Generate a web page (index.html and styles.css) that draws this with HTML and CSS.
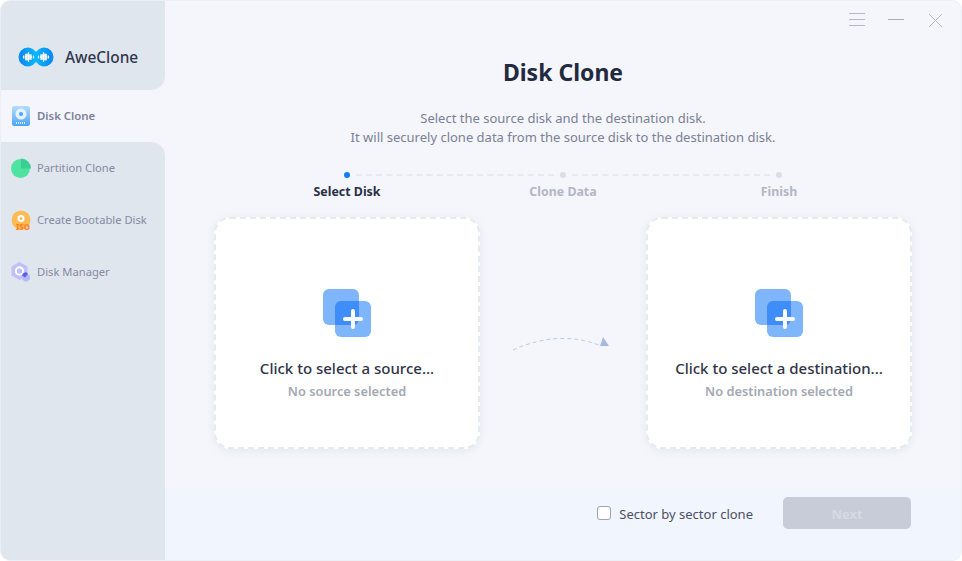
FILE: index.html
```html
<!DOCTYPE html>
<html>
<head>
<title>AweClone</title>
<link rel="stylesheet" href="styles.css">
</head>
<body>
<div class="window">
  <div class="sidebar">
    <div class="logo">
      <svg width="36" height="20" viewBox="0 0 36 20">
        <defs>
          <linearGradient id="logoGrad" x1="0" y1="0" x2="1" y2="0">
            <stop offset="0" stop-color="#0a8cf5"/>
            <stop offset="0.5" stop-color="#0ab8fa"/>
            <stop offset="1" stop-color="#0a8cf5"/>
          </linearGradient>
        </defs>
        <path d="M10 3.500c4 0 6 3.500 8 6.500s4 6.500 8 6.500a6.500 6.500 0 0 0 0-13c-4 0-6 3.500-8 6.500s-4 6.500-8 6.500a6.500 6.500 0 0 1 0-13z" fill="none" stroke="url(#logoGrad)" stroke-width="6"/>
        <path d="M5.500 9v2M8 7v6M10.500 5.500v9M13 7.500v5M15.500 9v2M20.500 9v2M23 7.500v5M25.500 5.500v9M28 7v6M30.500 9v2" stroke="#fff" stroke-width="1.100" stroke-linecap="round"/>
      </svg>
      <span class="logo-name">AweClone</span>
    </div>
    <div class="nav-item active">
      <svg width="18" height="20" viewBox="0 0 18 20">
        <defs>
          <linearGradient id="diskGrad" x1="0" y1="0" x2="0" y2="1">
            <stop offset="0" stop-color="#b5dcfb"/>
            <stop offset="1" stop-color="#4da3f5"/>
          </linearGradient>
        </defs>
        <rect width="18" height="20" rx="2.500" fill="url(#diskGrad)"/>
        <circle cx="9" cy="8" r="5.500" fill="#e6f3fe"/>
        <circle cx="9" cy="8" r="2" fill="#4da3f5"/>
        <path d="M4 17h10" stroke="#d6ebfd" stroke-width="2" stroke-dasharray="1 1"/>
      </svg>
      <span>Disk Clone</span>
    </div>
    <div class="nav-rest">
      <div class="nav-item">
        <svg width="20" height="20" viewBox="0 0 20 20">
          <circle cx="9.500" cy="10.500" r="9.500" fill="#4fe3a2"/>
          <path d="M10 0.500a10 10 0 0 1 10 10h-10z" fill="#38cf92"/>
        </svg>
        <span>Partition Clone</span>
      </div>
      <div class="nav-item">
        <svg width="20" height="20" viewBox="0 0 20 20">
          <circle cx="10" cy="10" r="9.500" fill="#fdbb55"/>
          <circle cx="10" cy="8.500" r="3.500" fill="#fff"/>
          <circle cx="10" cy="8.500" r="1.300" fill="#fda53a"/>
          <text class="iso-text" x="5" y="19.500">ISO</text>
        </svg>
        <span>Create Bootable Disk</span>
      </div>
      <div class="nav-item">
        <svg width="20" height="20" viewBox="0 0 20 20">
          <path d="M8.500 0l8 4.500v9l-8 4.500-8-4.500v-9z" fill="#bcc0fb"/>
          <circle cx="8.500" cy="9" r="3.700" fill="none" stroke="#fff" stroke-width="2"/>
          <path d="M14 11l5 2.500v4l-4 2.500-4-2.500z" fill="#b6bbf8"/>
          <path d="M12 11.500l3-1.500 2 2-3 3.500-3-2z" fill="#5a5cf0"/>
        </svg>
        <span>Disk Manager</span>
      </div>
    </div>
  </div>

  <div class="main">
    <div class="titlebar">
      <svg width="16" height="14" viewBox="0 0 16 14"><path d="M0 .5h16M0 6.500h16M0 12.500h16" stroke="#b4b9c6" stroke-width="1"/></svg>
      <svg width="17" height="14" viewBox="0 0 17 14"><path d="M0 6.500h16" stroke="#a9aebc" stroke-width="1"/></svg>
      <svg width="15" height="15" viewBox="0 0 15 15"><path d="M1 1l13 13M14 1L1 14" stroke="#b4b9c6" stroke-width="1"/></svg>
    </div>
    <h1 class="title">Disk Clone</h1>
    <p class="subtitle">Select the source disk and the destination disk.<br>It will securely clone data from the source disk to the destination disk.</p>

    <div class="steps">
      <div class="step current"><i class="dot"></i><span>Select Disk</span></div>
      <div class="step"><i class="dot"></i><span>Clone Data</span></div>
      <div class="step"><i class="dot"></i><span>Finish</span></div>
    </div>

    <div class="cards">
      <div class="card">
        <svg class="add-icon" width="48" height="48" viewBox="0 0 48 48">
          <rect width="36" height="36" rx="6" fill="#7fb5fb"/>
          <rect x="12" y="12" width="36" height="36" rx="6" fill="#7fb5fb"/>
          <path d="M18 12h18v18a6 6 0 0 1-6 6h-18v-18a6 6 0 0 1 6-6z" fill="#3f8cfb"/>
          <path d="M30 22v16M22 30h16" stroke="#fff" stroke-width="4" stroke-linecap="round"/>
        </svg>
        <div class="card-title">Click to select a source...</div>
        <div class="card-sub">No source selected</div>
      </div>
      <svg class="arrow" width="100" height="20" viewBox="2 0 100 20">
        <path d="M2 17C30 4 62 1 90 13" fill="none" stroke="#bccbe2" stroke-width="1" stroke-dasharray="4 3"/>
        <path d="M92 4l6 9h-9z" fill="#a4bbdd"/>
      </svg>
      <div class="card">
        <svg class="add-icon" width="48" height="48" viewBox="0 0 48 48">
          <rect width="36" height="36" rx="6" fill="#7fb5fb"/>
          <rect x="12" y="12" width="36" height="36" rx="6" fill="#7fb5fb"/>
          <path d="M18 12h18v18a6 6 0 0 1-6 6h-18v-18a6 6 0 0 1 6-6z" fill="#3f8cfb"/>
          <path d="M30 22v16M22 30h16" stroke="#fff" stroke-width="4" stroke-linecap="round"/>
        </svg>
        <div class="card-title">Click to select a destination...</div>
        <div class="card-sub">No destination selected</div>
      </div>
    </div>

    <div class="footer">
      <label class="check"><i class="box"></i><span>Sector by sector clone</span></label>
      <button class="next" disabled>Next</button>
    </div>
  </div>
</div>
</body>
</html>
```

FILE: styles.css
```css
* {
    box-sizing: border-box;
}

body {
    margin: 0;
    background-color: #fff;
    font-family: "Noto Sans", sans-serif;
}

.window {
    display: flex;
    width: 962px;
    height: 561px;
    overflow: hidden;
    background-color: #f4f6fb;
    border: 1px solid #eceff5;
    border-radius: 10px;
}

.sidebar {
    display: flex;
    flex-direction: column;
    width: 165px;
    margin-top: -1px;
    margin-bottom: -1px;
    margin-left: -1px;
    flex-shrink: 0;
}

.logo {
    display: flex;
    align-items: center;
    height: 90px;
    padding: 24px 0 0 18px;
    background-color: #e0e6ee;
    border-radius: 0 0 14px 0;
}

.logo-name {
    margin-left: 11px;
    font-size: 15.400px;
    font-weight: 500;
    color: #30364c;
}

.nav-item {
    display: flex;
    align-items: center;
    height: 52px;
    padding-left: 11px;
    font-size: 11.200px;
    color: #858aa3;
}

.nav-item span {
    margin-bottom: 2px;
}

.nav-item svg {
    flex-shrink: 0;
    margin-right: 6px;
}

.nav-item.active {
    padding-left: 12px;
    font-size: 11.400px;
    font-weight: 600;
    color: #7c8198;
}

.nav-item.active svg {
    margin-right: 7px;
}

.iso-text {
    font-size: 8px;
    font-weight: 800;
    fill: #fd8221;
}

.nav-rest {
    flex: 1;
    background-color: #e0e6ee;
    border-radius: 0 14px 0 0;
}

.main {
    flex: 1;
    display: flex;
    flex-direction: column;
    min-width: 0;
}

.titlebar {
    display: flex;
    justify-content: flex-end;
    align-items: flex-start;
    gap: 23px;
    height: 38px;
    padding: 12px 18px 0 0;
}

.title {
    margin: 16px 0 0;
    text-align: center;
    font-size: 23px;
    line-height: 34px;
    font-weight: 700;
    color: #23293f;
}

.subtitle {
    margin: 20px 0 0;
    text-align: center;
    font-size: 13px;
    line-height: 19px;
    color: #7b8095;
}

.steps {
    display: grid;
    grid-template-columns: repeat(3, 216px);
    justify-content: center;
    margin-top: 25px;
}

.step {
    position: relative;
    display: flex;
    flex-direction: column;
    align-items: center;
    font-size: 12.400px;
    font-weight: 700;
    line-height: 18px;
    color: #b3b7c5;
}

.step.current {
    color: #2a3046;
}

.dot {
    width: 6px;
    height: 6px;
    margin-bottom: 5px;
    border-radius: 50%;
    background-color: #d8dfe9;
}

.current .dot {
    background-color: #0f7ffa;
}

/* dashed line running to the next step */
.step:not(:last-child)::after {
    content: "";
    position: absolute;
    top: 2px;
    left: calc(50% + 9px);
    width: 198px;
    border-top: 2px dashed #e6e9f0;
}

.cards {
    display: flex;
    justify-content: space-between;
    align-items: center;
    width: 698px;
    margin: 16px 0 0 49px;
}

.card {
    display: flex;
    flex-direction: column;
    align-items: center;
    width: 266px;
    height: 232px;
    padding-top: 70px;
    background-color: #fff;
    border: 2px dashed #e6e9ee;
    border-radius: 16px;
    box-shadow: 0 2px 8px rgba(120, 140, 180, 0.12);
}

.add-icon {
    margin-bottom: 21px;
}

.card-title {
    font-size: 15px;
    line-height: 20px;
    font-weight: 500;
    color: #2f3448;
}

.card-sub {
    margin-top: 4px;
    font-size: 12.800px;
    line-height: 18px;
    font-weight: 600;
    color: #a4a8b3;
}

.arrow {
    margin-top: 20px;
}

.footer {
    display: flex;
    justify-content: flex-end;
    align-items: center;
    height: 71px;
    margin-top: auto;
    padding: 0 50px 24px 0;
    background-color: #f1f5fe;
}

.check {
    display: flex;
    align-items: center;
    margin-right: 30px;
    font-size: 13px;
    color: #4c5064;
}

.check span {
    padding-top: 2px;
}

.box {
    width: 14px;
    height: 14px;
    margin-right: 8px;
    background-color: #fff;
    border: 1px solid #9ea3b3;
    border-radius: 3px;
}

.next {
    width: 128px;
    height: 32px;
    padding: 2px 0 0;
    font-family: inherit;
    font-size: 13px;
    font-weight: 700;
    color: #d6dae3;
    background-color: #c7ccd8;
    border: none;
    border-radius: 5px;
}
```
